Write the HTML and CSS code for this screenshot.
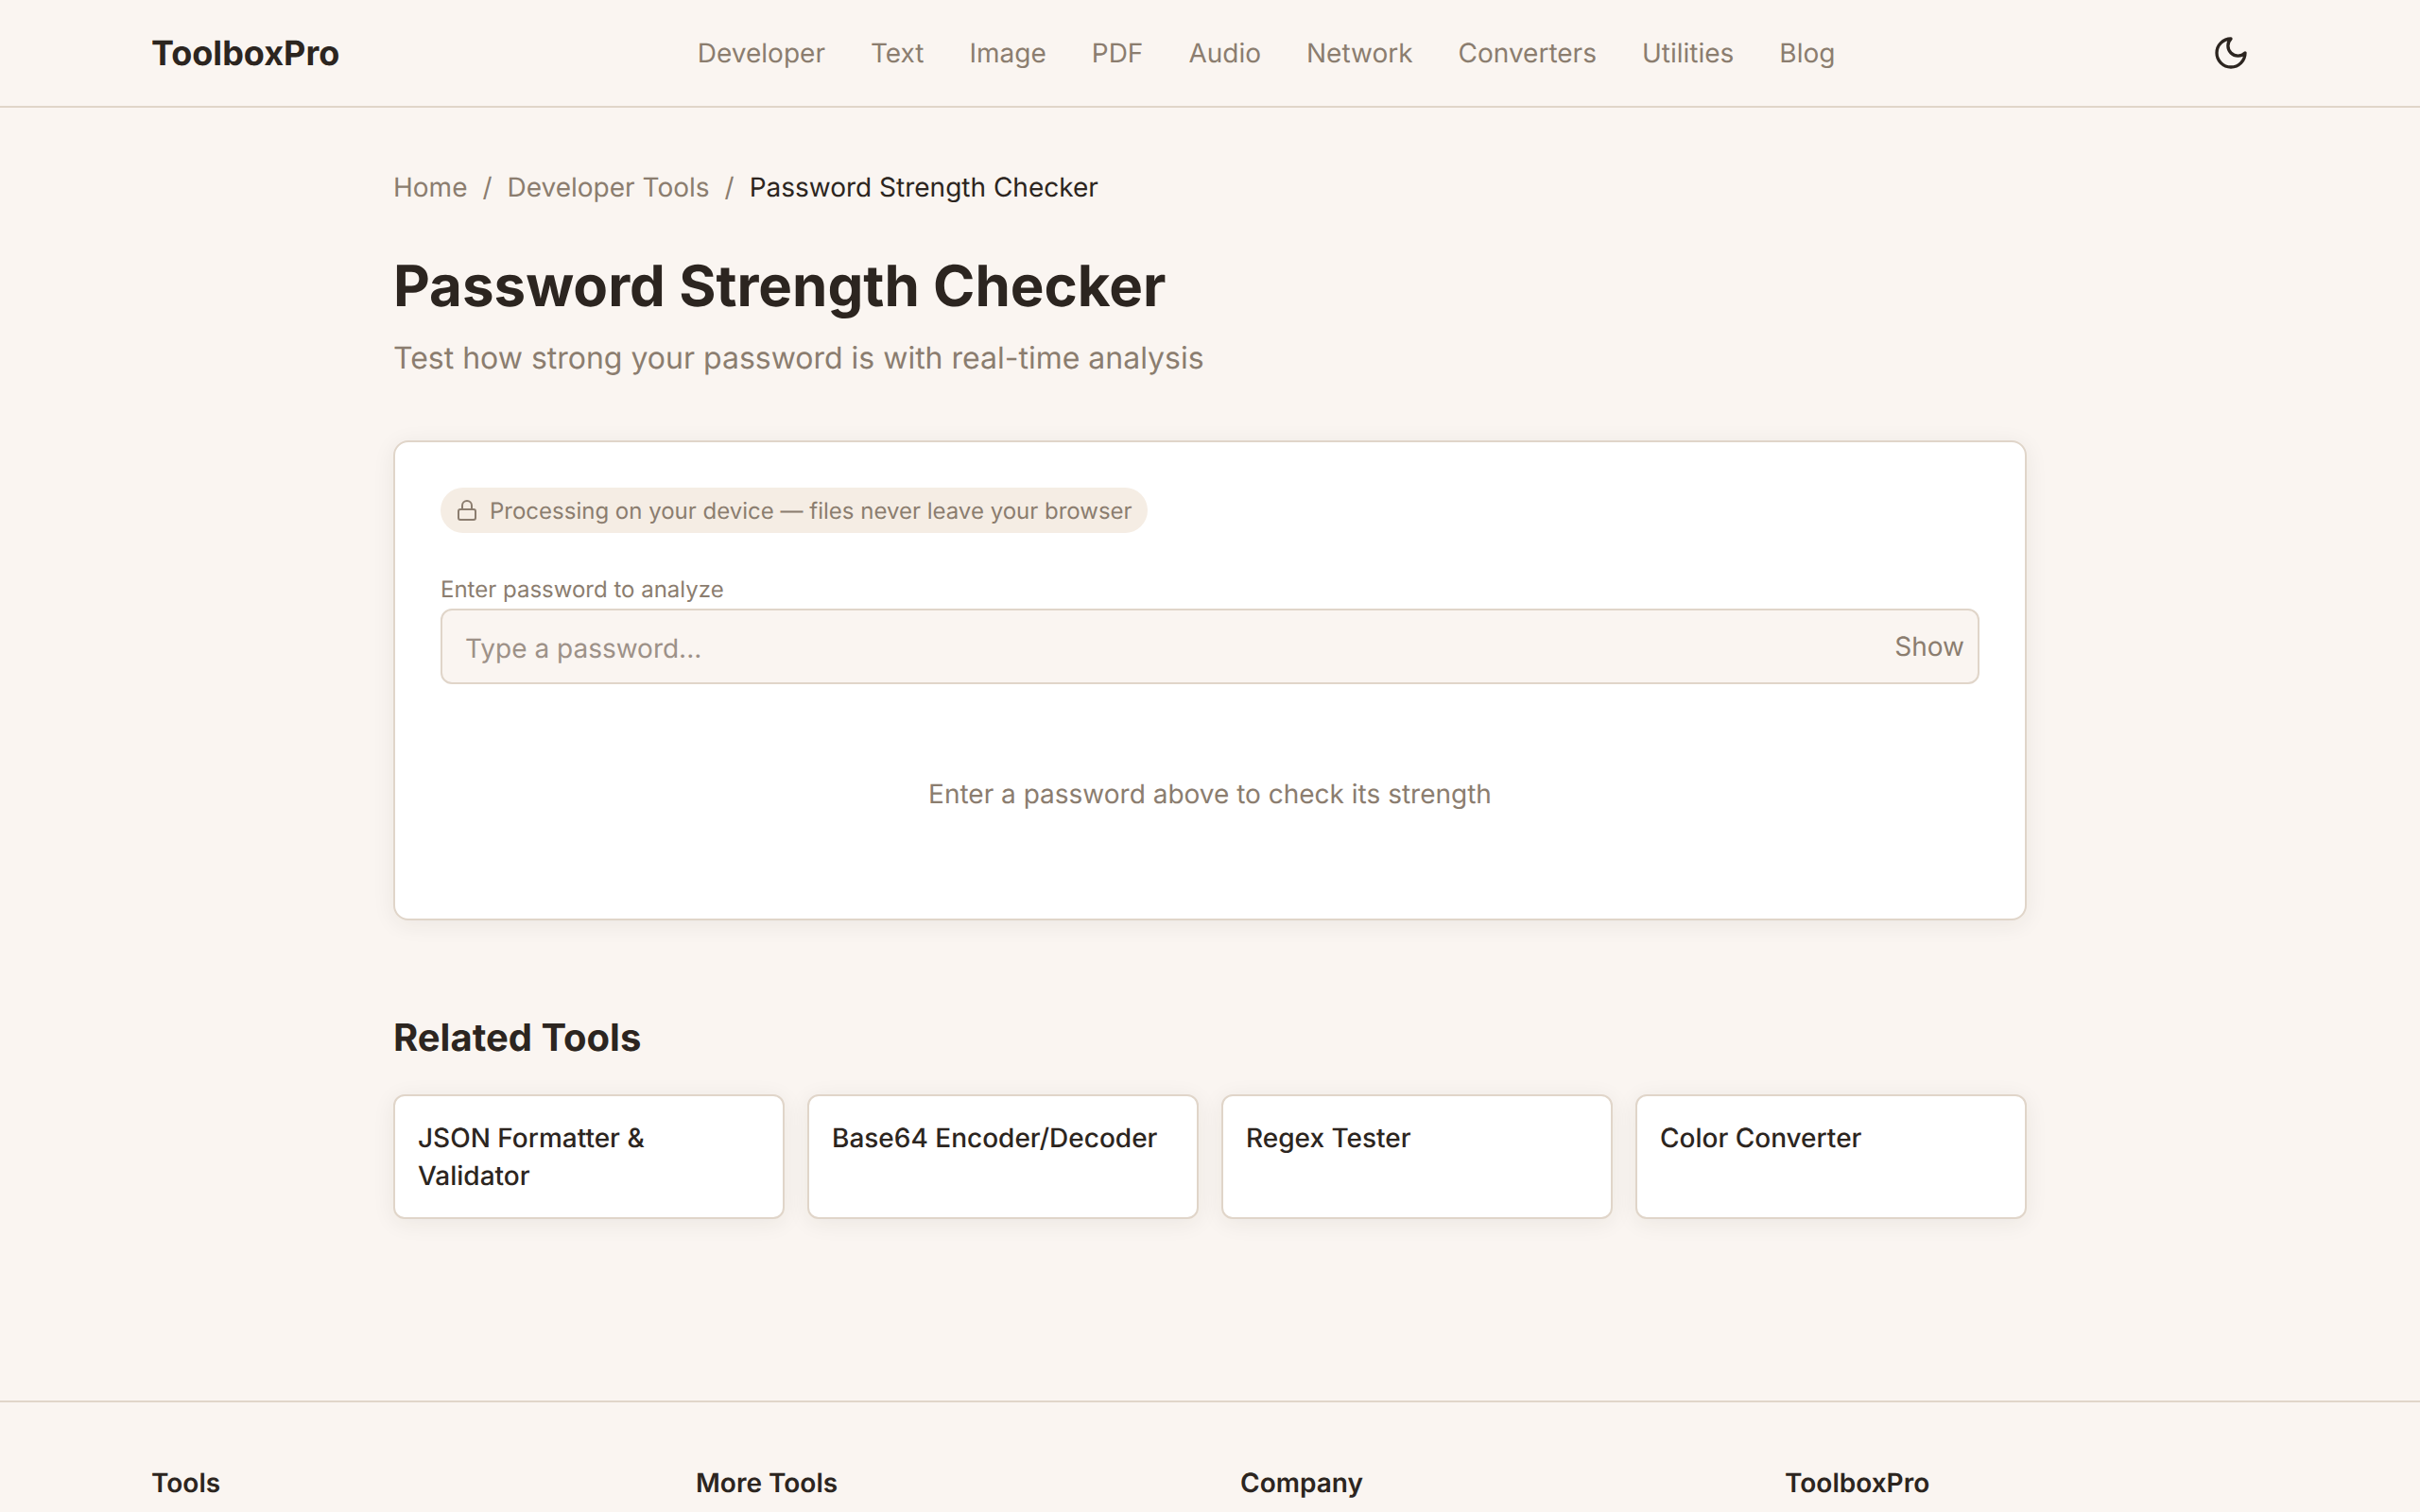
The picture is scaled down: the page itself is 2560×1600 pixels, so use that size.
FILE: index.html
```html
<!DOCTYPE html>
<html lang="en">
<head>
<meta charset="utf-8">
<title>Password Strength Checker</title>
<link rel="stylesheet" href="styles.css">
</head>
<body>
<header class="site-header">
  <a class="logo" href="#">ToolboxPro</a>
  <nav class="nav">
    <a href="#">Developer</a><a href="#">Text</a><a href="#">Image</a><a href="#">PDF</a><a href="#">Audio</a><a href="#">Network</a><a href="#">Converters</a><a href="#">Utilities</a><a href="#">Blog</a>
  </nav>
  <button class="theme-btn" aria-label="Toggle theme">
    <svg class="moon" viewBox="0 0 24 24" fill="none" stroke="currentColor" stroke-width="2" stroke-linecap="round" stroke-linejoin="round"><path d="M12 3a6 6 0 0 0 9 9 9 9 0 1 1-9-9Z"/></svg>
  </button>
</header>
<main class="main">
  <div class="breadcrumb"><a href="#">Home</a><span class="sep">/</span><a href="#">Developer Tools</a><span class="sep">/</span><span class="current">Password Strength Checker</span></div>
  <h1 class="title">Password Strength Checker</h1>
  <p class="subtitle">Test how strong your password is with real-time analysis</p>
  <section class="card">
    <div class="pill">
      <svg class="lock" viewBox="0 0 24 24" fill="none" stroke="currentColor" stroke-width="2" stroke-linecap="round" stroke-linejoin="round"><rect x="3" y="11" width="18" height="11" rx="2" ry="2"/><path d="M7 11V7a5 5 0 0 1 10 0v4"/></svg>
      <span>Processing on your device — files never leave your browser</span>
    </div>
    <label class="field-label" for="pw">Enter password to analyze</label>
    <div class="input-wrap">
      <input id="pw" class="input" type="password" placeholder="Type a password...">
      <button class="show-btn">Show</button>
    </div>
    <p class="hint">Enter a password above to check its strength</p>
  </section>
  <h2 class="related-title">Related Tools</h2>
  <div class="related-grid">
    <a class="tool-card" href="#">JSON Formatter &amp; Validator</a>
    <a class="tool-card" href="#">Base64 Encoder/Decoder</a>
    <a class="tool-card" href="#">Regex Tester</a>
    <a class="tool-card" href="#">Color Converter</a>
  </div>
</main>
<footer class="footer">
  <h3 class="foot-title">Tools</h3>
  <h3 class="foot-title">More Tools</h3>
  <h3 class="foot-title">Company</h3>
  <h3 class="foot-title">ToolboxPro</h3>
</footer>
</body>
</html>
```
FILE: styles.css
```css
* { box-sizing: border-box; margin: 0; padding: 0; }
html, body { height: 1600px; overflow: hidden; }
body {
  background: #faf5f1;
  color: #2c2520;
  font-family: Inter, "Liberation Sans", sans-serif;
  text-rendering: geometricPrecision;
}
a { color: inherit; text-decoration: none; }

.site-header {
  height: 114px;
  padding: 0 160px;
  display: flex;
  align-items: center;
  justify-content: space-between;
  border-bottom: 2px solid #e0d5c9;
}
.logo { font-size: 36px; font-weight: 700; }
.nav { display: flex; gap: 48px; font-size: 28px; color: #8b7d6f; }
.theme-btn {
  width: 80px; height: 80px;
  display: flex; align-items: center; justify-content: center;
  background: none; border: 0; color: #2c2520;
}
.moon { width: 40px; height: 40px; }

.main { width: 1728px; margin: 0 auto; padding-top: 63px; }
.breadcrumb { display: flex; font-size: 28px; line-height: 42px; color: #8b7d6f; }
.sep { margin: 0 16px; }
.current { color: #2c2520; }
.title { font-size: 60px; font-weight: 700; line-height: 72px; margin-top: 48px; }
.subtitle { font-size: 32px; line-height: 48px; color: #8b7d6f; margin-top: 16px; }

.card {
  margin-top: 63px;
  height: 508px;
  padding: 48px;
  background: #fff;
  border: 2px solid #e0d5c9;
  border-radius: 16px;
  box-shadow: 0 4px 24px rgba(44, 37, 32, 0.07);
}
.pill {
  display: inline-flex;
  align-items: center;
  gap: 12px;
  height: 48px;
  padding: 0 16px;
  background: #f5ede4;
  border-radius: 24px;
  font-size: 24px;
  color: #8b7d6f;
}
.lock { width: 24px; height: 24px; }
.field-label { display: block; margin-top: 44px; font-size: 24px; line-height: 32px; color: #8b7d6f; }
.input-wrap { position: relative; margin-top: 4px; }
.input {
  display: block;
  width: 100%;
  height: 80px;
  padding: 4px 24px 0;
  background: #faf5f1;
  border: 2px solid #e0d5c9;
  border-radius: 12px;
  font: 400 28px Inter, "Liberation Sans", sans-serif;
  text-rendering: geometricPrecision;
  color: #2c2520;
}
.input::placeholder { color: #9d9188; opacity: 1; }
.show-btn {
  position: absolute;
  top: 0; right: 16px; bottom: 0;
  background: none; border: 0;
  font: 400 28px Inter, "Liberation Sans", sans-serif;
  text-rendering: geometricPrecision;
  color: #8b7d6f;
}
.hint { margin-top: 95px; text-align: center; font-size: 28px; line-height: 42px; color: #8b7d6f; }

.related-title { margin-top: 96px; font-size: 40px; font-weight: 700; line-height: 56px; }
.related-grid { margin-top: 32px; display: grid; grid-template-columns: repeat(4, 1fr); gap: 24px; }
.tool-card {
  height: 132px;
  padding: 24px;
  background: #fff;
  border: 2px solid #e0d5c9;
  border-radius: 12px;
  box-shadow: 0 4px 24px rgba(44, 37, 32, 0.07);
  font-size: 28px;
  font-weight: 500;
  line-height: 40px;
}

.footer {
  position: absolute;
  left: 0; right: 0; top: 1482px;
  padding: 65px 160px 0;
  border-top: 2px solid #e0d5c9;
  display: grid;
  grid-template-columns: repeat(4, 1fr);
  gap: 64px;
}
.foot-title { font-size: 28px; font-weight: 600; line-height: 40px; }
```
